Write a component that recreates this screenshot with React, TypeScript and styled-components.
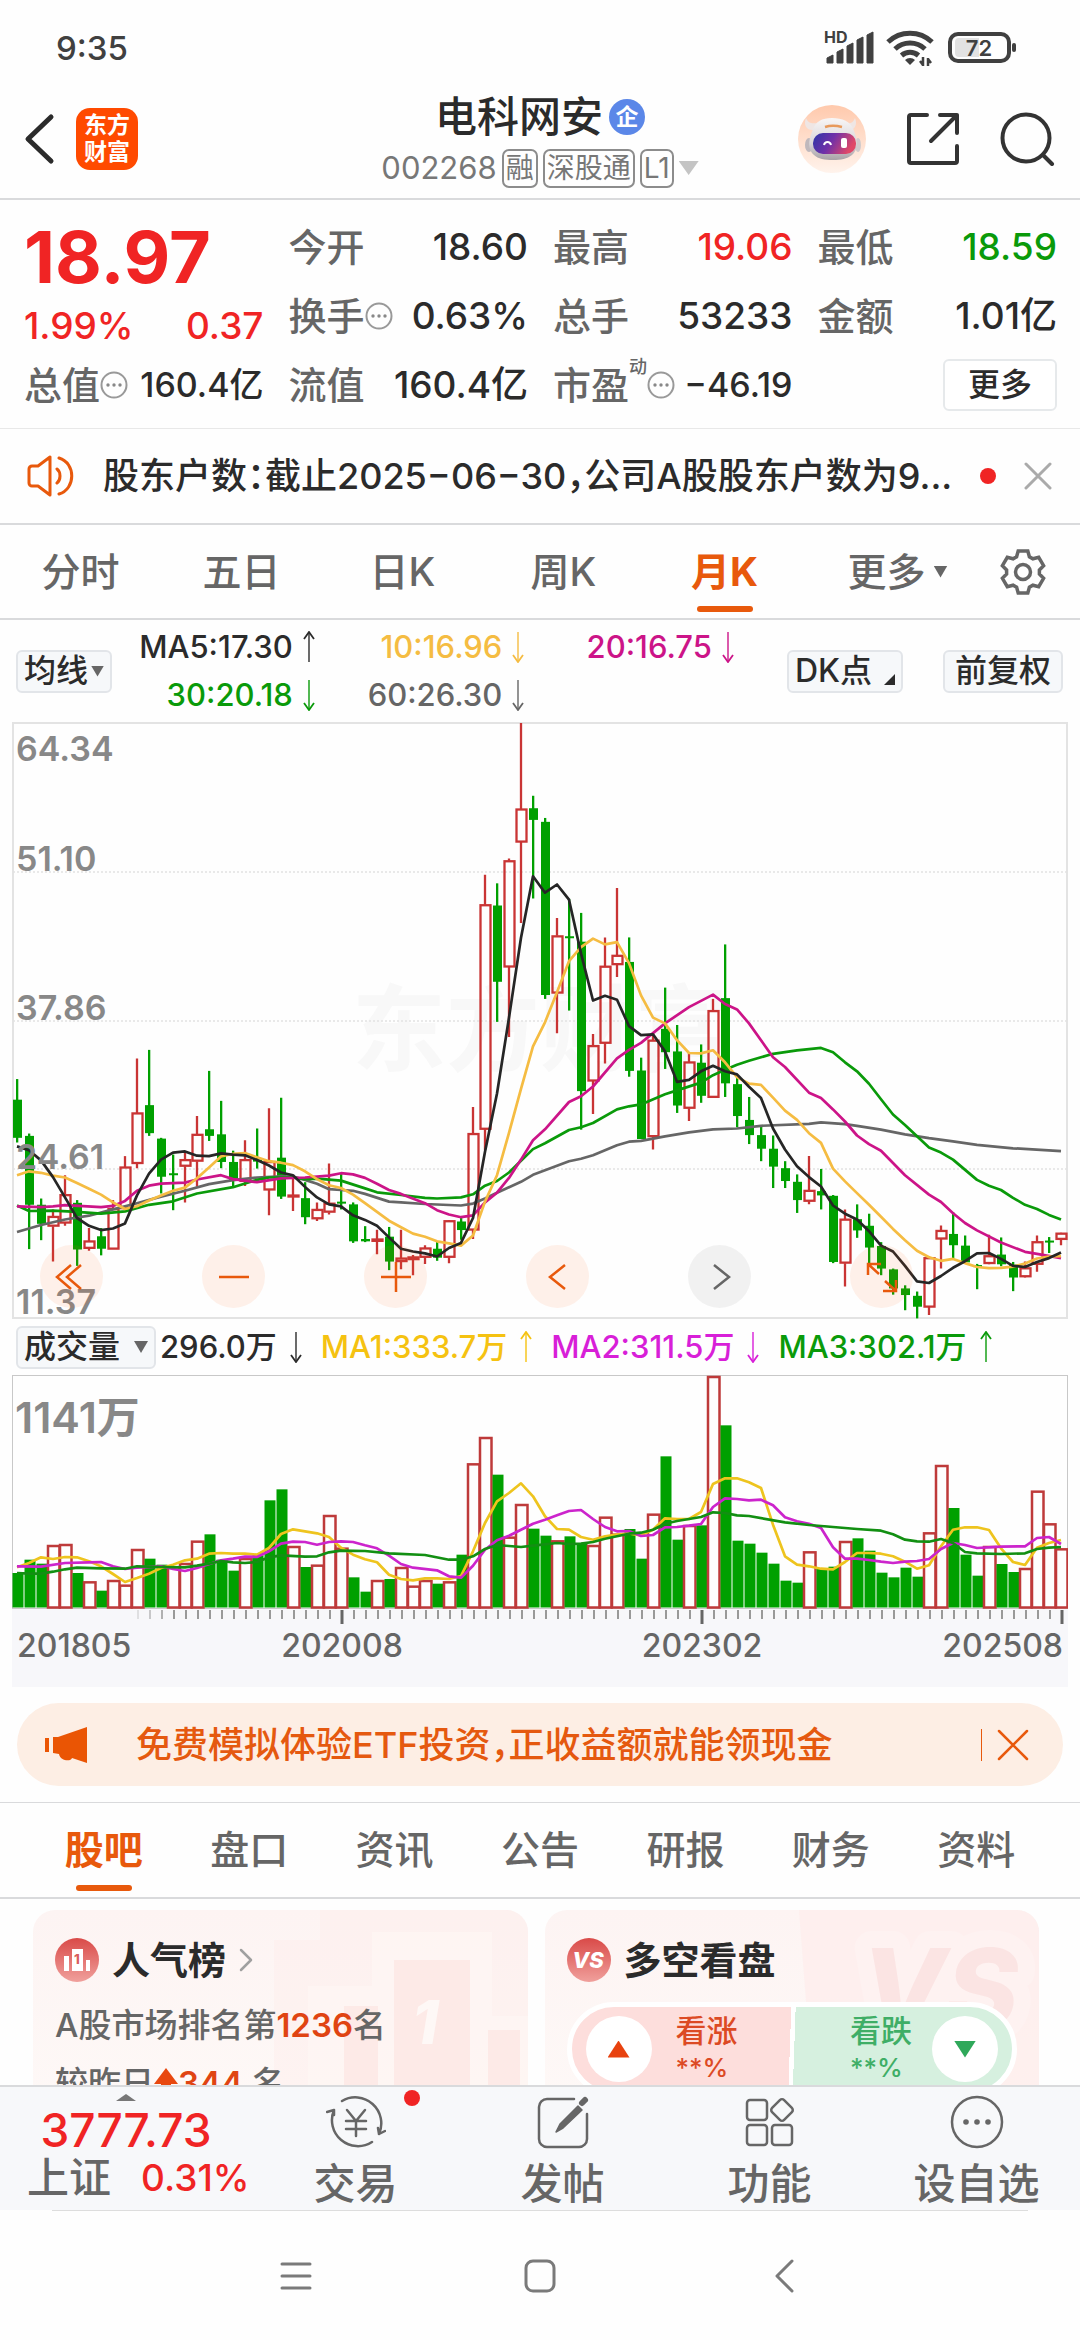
import React from "react";
import styled, { createGlobalStyle } from "styled-components";

const RED = "#f02424";
const GREEN = "#0a9a0a";
const ORANGE = "#e8590c";
const INK = "#2b2b2b";
const GREY = "#666666";
const LINE = "#d9dadc";

const GlobalStyle = createGlobalStyle`
  *, *::before, *::after { box-sizing: border-box; }
  body {
    margin: 0;
    background: #fefefe;
    color: ${INK};
    font-family: Inter, "Noto Sans CJK SC", sans-serif;
    font-weight: 500;
  }
  button {
    margin: 0;
    padding: 0;
    border: 0;
    background: none;
    color: inherit;
    font: inherit;
  }
  svg { display: block; flex: none; }
  h1, h2, p, dl, dt, dd { margin: 0; font: inherit; }
`;

/* ---------- data ---------- */

type Bar = [up: 0 | 1, high: number, top: number, bottom: number, low: number];
type Knot = [index: number, value: number];

const STEP = 12;
const PLOT_W = 1056;

const BARS: Bar[] = [
  [0, 923, 976, 1074, 1086], [0, 1063, 1069, 1246, 1360], [0, 1230, 1246, 1295, 1337], [1, 1258, 1276, 1301, 1392],
  [1, 1170, 1220, 1293, 1300], [0, 1234, 1241, 1361, 1403], [1, 1306, 1339, 1358, 1364], [0, 1306, 1327, 1359, 1376],
  [1, 1234, 1256, 1360, 1360], [1, 1121, 1149, 1256, 1256], [1, 870, 1010, 1140, 1152], [0, 848, 990, 1062, 1069],
  [0, 1074, 1076, 1174, 1217], [0, 1117, 1165, 1168, 1260], [1, 1113, 1130, 1147, 1240], [1, 1018, 1065, 1134, 1200],
  [0, 902, 1052, 1069, 1082], [0, 979, 1065, 1136, 1152], [0, 1107, 1136, 1182, 1202], [1, 1080, 1130, 1186, 1198],
  [0, 1050, 1130, 1134, 1153], [1, 998, 1135, 1208, 1273], [0, 971, 1125, 1225, 1231], [1, 1180, 1221, 1226, 1262],
  [0, 1188, 1229, 1278, 1296], [1, 1240, 1258, 1282, 1288], [1, 1140, 1242, 1265, 1271], [0, 1167, 1238, 1243, 1258],
  [0, 1240, 1245, 1340, 1344], [0, 1301, 1334, 1340, 1342], [1, 1310, 1334, 1340, 1373], [0, 1303, 1328, 1392, 1414],
  [1, 1310, 1383, 1392, 1412], [1, 1375, 1380, 1387, 1427], [1, 1350, 1357, 1381, 1398], [0, 1340, 1359, 1382, 1390],
  [1, 1285, 1287, 1381, 1396], [0, 1280, 1289, 1311, 1336], [1, 995, 1063, 1311, 1334], [1, 398, 475, 1052, 1105],
  [0, 420, 477, 673, 776], [1, 356, 362, 635, 815], [1, 8, 229, 314, 522], [0, 195, 227, 257, 459],
  [0, 252, 262, 707, 717], [1, 509, 555, 702, 805], [0, 460, 556, 560, 747], [0, 496, 570, 954, 1053],
  [1, 807, 837, 928, 1013], [1, 559, 633, 831, 883], [1, 432, 605, 629, 661], [0, 559, 622, 902, 917],
  [0, 868, 901, 1077, 1077], [1, 808, 823, 1071, 1104], [0, 688, 794, 854, 897], [0, 784, 852, 991, 1010],
  [1, 855, 879, 998, 1031], [0, 834, 881, 966, 984], [1, 717, 747, 970, 970], [0, 577, 715, 934, 969],
  [0, 920, 936, 1018, 1047], [0, 969, 1028, 1067, 1090], [0, 1045, 1067, 1102, 1134], [0, 1068, 1102, 1148, 1203],
  [0, 1134, 1152, 1185, 1203], [0, 1168, 1187, 1234, 1267], [1, 1121, 1209, 1237, 1245], [0, 1154, 1211, 1222, 1258],
  [0, 1221, 1223, 1393, 1396], [1, 1258, 1283, 1396, 1456], [0, 1245, 1283, 1312, 1331], [0, 1269, 1300, 1356, 1400],
  [0, 1342, 1352, 1410, 1427], [0, 1410, 1412, 1461, 1477], [0, 1453, 1461, 1478, 1517], [0, 1469, 1480, 1508, 1538],
  [1, 1378, 1382, 1509, 1529], [1, 1299, 1312, 1334, 1410], [0, 1265, 1321, 1350, 1384], [0, 1325, 1351, 1394, 1397],
  [0, 1398, 1401, 1404, 1463], [1, 1323, 1377, 1397, 1399], [0, 1330, 1374, 1399, 1404], [0, 1393, 1400, 1433, 1468],
  [1, 1392, 1408, 1431, 1433], [1, 1325, 1341, 1399, 1418], [0, 1329, 1338, 1342, 1370], [1, 1318, 1319, 1335, 1350],
];

const fromList = (start: number, values: number[]): Knot[] => values.map((v, i) => [start + i, v]);

const PRICE_LINES: { color: string; knots: Knot[] }[] = [
  {
    color: "#666666",
    knots: [[0, 1316], [2, 1298], [4, 1284], [6, 1274], [8, 1258], [10, 1242], [12, 1225], [14, 1210], [16, 1193], [18, 1183], [20, 1176], [22, 1173], [23, 1174], [24, 1182], [25, 1192], [26, 1206], [27, 1208], [28, 1210], [29, 1218], [31, 1238], [32, 1240], [34, 1244], [37, 1248], [38, 1243], [39, 1230], [40, 1215], [42, 1187], [43, 1169], [46, 1134], [47, 1128], [48, 1119], [50, 1093], [51, 1084], [52, 1082], [54, 1070], [56, 1060], [58, 1052], [60, 1050], [62, 1043], [66, 1038], [67, 1034], [69, 1039], [70, 1043], [72, 1053], [74, 1065], [76, 1075], [78, 1083], [80, 1092], [83, 1101], [87, 1108]],
  },
  {
    color: "#0a9a0a",
    knots: [[0, 1248], [1, 1262], [3, 1261], [5, 1264], [7, 1269], [9, 1263], [11, 1246], [13, 1237], [15, 1217], [18, 1201], [20, 1182], [21, 1176], [23, 1176], [24, 1180], [25, 1179], [27, 1184], [29, 1204], [30, 1214], [32, 1221], [34, 1228], [35, 1230], [37, 1227], [38, 1219], [39, 1197], [40, 1185], [41, 1163], [42, 1133], [43, 1103], [44, 1088], [46, 1054], [47, 1047], [48, 1036], [50, 1001], [51, 993], [52, 988], [54, 962], [55, 952], [57, 932], [58, 913], [59, 899], [60, 886], [61, 876], [63, 858], [65, 849], [67, 843], [68, 854], [69, 880], [70, 903], [71, 935], [72, 975], [73, 1014], [74, 1041], [75, 1070], [76, 1099], [77, 1112], [78, 1130], [80, 1182], [81, 1197], [82, 1208], [83, 1228], [84, 1246], [85, 1257], [86, 1272], [87, 1284]],
  },
  {
    color: "#cc1488",
    knots: [[0, 1250], [2, 1252], [3, 1250], [4, 1247], [7, 1252], [8, 1249], [9, 1236], [10, 1210], [11, 1197], [12, 1192], [14, 1189], [15, 1181], [17, 1170], [18, 1180], [20, 1188], [22, 1178], [24, 1176], [26, 1171], [27, 1165], [28, 1168], [29, 1177], [30, 1192], [31, 1208], [32, 1218], [34, 1242], [35, 1260], [36, 1271], [37, 1278], [38, 1273], [39, 1240], [40, 1215], [41, 1177], [42, 1130], [43, 1080], [44, 1052], [46, 982], [47, 967], [48, 942], [50, 870], [51, 848], [52, 830], [54, 780], [56, 738], [58, 706], [59, 730], [60, 744], [61, 780], [62, 823], [63, 867], [64, 892], [66, 958], [67, 972], [68, 1001], [69, 1032], [70, 1068], [71, 1090], [72, 1107], [74, 1170], [76, 1220], [77, 1239], [78, 1268], [79, 1293], [80, 1312], [82, 1343], [84, 1367], [85, 1372], [87, 1383]],
  },
  {
    color: "#f5bc42",
    knots: fromList(0, [1170, 1160, 1164, 1171, 1176, 1190, 1205, 1220, 1240, 1257, 1250, 1235, 1222, 1210, 1202, 1178, 1150, 1122, 1115, 1113, 1124, 1134, 1138, 1144, 1160, 1180, 1196, 1203, 1220, 1242, 1264, 1287, 1304, 1320, 1328, 1340, 1345, 1351, 1325, 1238, 1170, 1061, 948, 839, 777, 700, 620, 584, 562, 577, 571, 625, 708, 765, 780, 823, 856, 857, 849, 880, 918, 935, 938, 971, 1004, 1028, 1062, 1087, 1153, 1186, 1216, 1246, 1277, 1308, 1337, 1364, 1381, 1390, 1385, 1396, 1406, 1409, 1408, 1405, 1397, 1384, 1379, 1378]),
  },
  {
    color: "#262626",
    knots: fromList(0, [1096, 1106, 1132, 1175, 1227, 1280, 1300, 1311, 1307, 1294, 1222, 1166, 1130, 1112, 1109, 1120, 1121, 1114, 1117, 1119, 1131, 1145, 1163, 1170, 1200, 1227, 1245, 1250, 1273, 1285, 1300, 1330, 1359, 1366, 1371, 1379, 1357, 1344, 1280, 1110, 960, 765, 560, 402, 444, 423, 462, 600, 721, 709, 719, 787, 810, 808, 852, 930, 925, 903, 889, 903, 911, 943, 972, 1050, 1104, 1147, 1175, 1199, 1248, 1269, 1284, 1314, 1351, 1366, 1403, 1443, 1447, 1429, 1408, 1391, 1371, 1370, 1385, 1403, 1406, 1393, 1383, 1369]),
  },
];

const VOLUME_TOPS = [
  790, 750, 762, 706, 703, 790, 815, 843, 811, 825, 718, 747, 765, 770, 760, 693, 674, 750, 783, 745, 737, 572,
  539, 709, 772, 765, 616, 714, 803, 846, 811, 808, 772, 828, 811, 822, 815, 735, 461, 382, 495, 681, 583, 657,
  678, 692, 680, 700, 706, 621, 672, 658, 747, 612, 440, 690, 646, 647, 199, 347, 693, 702, 729, 762, 813, 819,
  725, 775, 771, 694, 686, 723, 789, 803, 774, 801, 668, 466, 595, 735, 798, 709, 763, 787, 775, 543, 641, 716,
];
const VOLUME_UP = new Set([3, 4, 6, 8, 9, 10, 13, 14, 15, 19, 23, 25, 26, 27, 30, 32, 33, 34, 36, 38, 39, 41, 42, 45, 48, 49, 50, 53, 56, 58, 66, 69, 76, 77, 81, 84, 85, 86, 87]);

const VOLUME_LINES: { color: string; knots: Knot[] }[] = [
  {
    color: "#eec41e",
    knots: fromList(0, [773, 760, 743, 748, 742, 743, 755, 770, 793, 817, 805, 792, 775, 765, 752, 747, 732, 730, 732, 732, 735, 715, 673, 659, 665, 671, 682, 714, 735, 749, 758, 795, 808, 812, 806, 806, 808, 799, 725, 640, 575, 550, 521, 560, 620, 658, 660, 682, 690, 680, 675, 671, 677, 660, 626, 628, 628, 607, 523, 506, 506, 518, 535, 645, 740, 765, 770, 777, 779, 757, 730, 730, 732, 740, 756, 777, 767, 710, 660, 653, 653, 661, 716, 757, 766, 714, 700, 691]),
  },
  {
    color: "#cc24cc",
    knots: [[0, 770], [2, 771], [4, 760], [6, 758], [7, 757], [8, 770], [9, 778], [10, 774], [12, 770], [13, 778], [14, 784], [15, 775], [17, 752], [18, 747], [19, 741], [20, 742], [21, 725], [22, 702], [23, 696], [24, 697], [25, 705], [26, 697], [27, 695], [28, 697], [29, 707], [30, 716], [31, 738], [32, 763], [33, 774], [35, 782], [36, 800], [37, 804], [38, 768], [39, 720], [40, 692], [41, 678], [42, 660], [43, 642], [44, 630], [45, 617], [46, 604], [47, 601], [48, 628], [49, 652], [50, 665], [51, 664], [52, 679], [53, 676], [54, 653], [55, 652], [56, 648], [57, 643], [58, 592], [59, 566], [60, 568], [61, 572], [62, 570], [63, 587], [64, 623], [65, 635], [66, 642], [67, 655], [68, 713], [69, 747], [70, 747], [71, 751], [72, 756], [73, 760], [74, 756], [75, 754], [76, 748], [77, 718], [78, 700], [79, 706], [80, 715], [82, 711], [84, 710], [85, 685], [86, 682], [87, 703]],
  },
  {
    color: "#128f12",
    knots: [[0, 790], [1, 792], [2, 792], [3, 786], [4, 779], [5, 774], [7, 776], [9, 777], [10, 770], [12, 772], [14, 773], [15, 768], [16, 762], [17, 754], [18, 758], [19, 760], [20, 757], [21, 743], [22, 737], [24, 741], [25, 740], [26, 728], [27, 723], [29, 724], [31, 731], [34, 736], [36, 750], [37, 750], [38, 740], [39, 718], [40, 706], [41, 709], [42, 712], [43, 708], [45, 700], [46, 703], [47, 702], [48, 697], [49, 687], [51, 672], [52, 669], [53, 660], [54, 642], [55, 634], [57, 622], [58, 608], [59, 610], [60, 617], [61, 619], [64, 638], [66, 646], [68, 652], [70, 658], [72, 663], [73, 674], [74, 690], [75, 695], [76, 696], [77, 688], [78, 700], [79, 727], [80, 731], [82, 733], [84, 731], [85, 718], [86, 714], [87, 712]],
  },
];

const barX = (i: number) => 5 + STEP * i;
const priceY = (v: number) => 1 + ((v - 8) * 595) / 1529;
const volumeY = (v: number) => 1 + (v - 199) / 3;
const toPoints = (knots: Knot[], y: (v: number) => number) =>
  knots.map(([i, v]) => `${barX(i)},${y(v).toFixed(1)}`).join(" ");

/* ---------- shared ---------- */

const Screen = styled.div`
  display: flex;
  flex-direction: column;
  height: 100vh;
  overflow: hidden;
`;

const Arrow = ({ up, color }: { up?: boolean; color: string }) => (
  <svg width="12" height="32" viewBox="0 0 12 32" fill="none" stroke={color} aria-hidden>
    <path d="M6 1V31" strokeWidth="1.4" />
    <path d={up ? "M1 8 6 1l5 7" : "M1 24l5 7 5-7"} strokeWidth="1.8" />
  </svg>
);

const Triangle = styled.span<{ $w: number; $h: number; $color: string; $up?: boolean }>`
  flex: none;
  width: ${(p) => p.$w}px;
  height: ${(p) => p.$h}px;
  background: ${(p) => p.$color};
  clip-path: ${(p) => (p.$up ? "polygon(50% 0, 100% 100%, 0 100%)" : "polygon(0 0, 100% 0, 50% 100%)")};
`;

const Chip = styled.button`
  display: flex;
  align-items: center;
  justify-content: center;
  gap: 3px;
  flex: none;
  height: 43px;
  padding: 0 6px;
  border: 2px solid #e2e5e9;
  border-radius: 6px;
  background: #f6f8fa;
  font-size: 32px;
  line-height: 36px;
  white-space: nowrap;
`;

/* ---------- status bar and header ---------- */

const StatusBar = styled.div`
  display: flex;
  align-items: center;
  justify-content: space-between;
  flex: none;
  height: 80px;
  padding: 16px 60px 0 56px;
  color: #404040;
  font-size: 33px;
  line-height: 40px;
`;

const StatusIcons = () => (
  <svg width="196" height="40" viewBox="0 0 196 40" fill="#404040" aria-hidden>
    <text x="0" y="15" fontSize="16" fontWeight="700">HD</text>
    {[8, 14, 20, 26, 31].map((h, i) => (
      <path key={h} d={`M${3 + i * 10} ${35}v-${h - 3}l6-3v${h}z`} stroke="#404040" strokeWidth="1" strokeLinejoin="round" />
    ))}
    <g fill="none" stroke="#404040" strokeWidth="5">
      <path d="M64 14a32 32 0 0 1 44 0" />
      <path d="M71 21a22 22 0 0 1 30 0" />
      <path d="M77.500 27.500a13 13 0 0 1 17 0" />
    </g>
    <path d="M81 32a7 7 0 0 1 10 0l-5 5z" />
    <path d="M99 29v9M99 37l-3-4M104 38v-8M104 31l3 4" stroke="#404040" strokeWidth="2.500" />
    <rect x="126" y="6" width="59" height="27" rx="8" fill="none" stroke="#404040" strokeWidth="4" />
    <path d="M131 14a4 4 0 0 1 4-4h20v19h-20a4 4 0 0 1-4-4z" fill="#e2e2e2" />
    <rect x="188" y="15" width="4" height="9" rx="2" />
    <text x="155" y="28" fontSize="22" fontWeight="600" textAnchor="middle">72</text>
  </svg>
);

const Header = styled.header`
  display: grid;
  grid-template-columns: 1fr auto 1fr;
  align-items: center;
  flex: none;
  height: 120px;
  padding: 0 24px;
  border-bottom: 2px solid ${LINE};
`;

const HeaderSide = styled.div<{ $end?: boolean }>`
  display: flex;
  align-items: center;
  gap: ${(p) => (p.$end ? 40 : 21)}px;
  justify-content: ${(p) => (p.$end ? "flex-end" : "flex-start")};
`;

const Logo = styled.div`
  display: grid;
  place-content: center;
  width: 62px;
  height: 62px;
  border-radius: 14px;
  background: #ff4a00;
  color: #fff;
  font-size: 23px;
  font-weight: 700;
  line-height: 27px;
`;

const TitleBlock = styled.div`
  display: flex;
  flex-direction: column;
  align-items: center;
  gap: 4px;
`;

const TitleRow = styled.div`
  display: flex;
  align-items: center;
  gap: 6px;
  font-size: 42px;
  line-height: 54px;
`;

const Badge = styled.span`
  display: grid;
  place-items: center;
  width: 36px;
  height: 36px;
  border-radius: 50%;
  background: #5b87e8;
  color: #fff;
  font-size: 23px;
  font-weight: 700;
  line-height: 30px;
`;

const CodeRow = styled.div`
  display: flex;
  align-items: center;
  gap: 5px;
  color: #777;
  font-size: 31px;
  font-weight: 400;
  line-height: 40px;
`;

const Tag = styled.span`
  height: 39px;
  padding: 0 2px;
  border: 2px solid #8c8c8c;
  border-radius: 7px;
  font-size: 28px;
  line-height: 35px;
`;

const Robot = () => (
  <svg width="68" height="68" viewBox="0 0 68 68" aria-hidden>
    <defs>
      <linearGradient id="halo" x1="0" y1="0" x2="0" y2="1">
        <stop offset="0" stopColor="#ffc9ac" />
        <stop offset="1" stopColor="#fff3ec" />
      </linearGradient>
      <linearGradient id="visor" x1="0" y1="0" x2="1" y2="0.300">
        <stop offset="0" stopColor="#2c36a8" />
        <stop offset="0.500" stopColor="#7030a8" />
        <stop offset="1" stopColor="#e04868" />
      </linearGradient>
      <linearGradient id="shell" x1="0" y1="0" x2="0" y2="1">
        <stop offset="0" stopColor="#f8f6f6" />
        <stop offset="0.600" stopColor="#dad6d9" />
        <stop offset="1" stopColor="#a8a2a6" />
      </linearGradient>
    </defs>
    <circle cx="34" cy="34" r="34" fill="url(#halo)" />
    <path d="M8 13c-3 7 1 13 8 12l3-7c-5 1-9 0-11-5zM57 13c3 7-1 13-7 12l-3-7c5 1 8 0 10-5z" fill="#efe6e4" />
    <ellipse cx="11" cy="40" rx="4" ry="7" fill="#bfb8bc" />
    <ellipse cx="60" cy="40" rx="3" ry="7" fill="#d0cacc" />
    <path d="M14 27c3-11 10-14 20-14s19 3 22 13c4 10 4 19-2 24-5 4-11 5-19 5s-15-1-19-5c-6-5-6-14-2-23z" fill="url(#shell)" />
    <path d="M27 22c5-1.500 11-1.500 17 0" stroke="#e89a5c" strokeWidth="2.500" fill="none" />
    <rect x="15" y="28" width="43" height="21" rx="10" fill="url(#visor)" />
    <path d="M26 40c1-4 6-4 7 0" stroke="#fff" strokeWidth="2" fill="none" />
    <rect x="43" y="33" width="6" height="10" rx="2" fill="#fff" />
  </svg>
);

/* ---------- quote ---------- */

const Quote = styled.section`
  display: grid;
  grid-template-columns: repeat(4, 1fr);
  grid-auto-rows: 69px;
  column-gap: 25px;
  flex: none;
  padding: 12px 23px 9px 24px;
  border-bottom: 1px solid #e8e8e8;
`;

const PriceCell = styled.div`
  grid-row: span 2;
  color: ${RED};
`;

const Price = styled.p`
  font-size: 72px;
  font-weight: 700;
  line-height: 90px;
`;

const Change = styled.p`
  display: flex;
  justify-content: space-between;
  font-size: 37px;
  line-height: 48px;
`;

const Field = styled.dl<{ $color?: string; $small?: boolean }>`
  display: flex;
  align-items: center;
  justify-content: space-between;
  white-space: nowrap;
  dt {
    display: flex;
    align-items: center;
    color: ${GREY};
    font-size: 38px;
    line-height: 56px;
  }
  dd {
    color: ${(p) => p.$color ?? INK};
    font-size: ${(p) => (p.$small ? 34 : 37)}px;
    line-height: 56px;
  }
`;

const Sup = styled.sup`
  align-self: flex-start;
  font-size: 18px;
  line-height: 20px;
`;

const MoreButton = styled.button`
  justify-self: end;
  align-self: center;
  width: 114px;
  height: 52px;
  border: 2px solid #e6e9eb;
  border-radius: 6px;
  background: #fff;
  font-size: 32px;
  line-height: 40px;
`;

const InfoDots = ({ size = 28 }: { size?: number }) => (
  <svg width={size} height={size} viewBox="0 0 28 28" aria-hidden>
    <circle cx="14" cy="14" r="12.500" fill="none" stroke="#999" strokeWidth="2" />
    <g fill="#888"><circle cx="8" cy="14" r="1.700" /><circle cx="14" cy="14" r="1.700" /><circle cx="20" cy="14" r="1.700" /></g>
  </svg>
);

/* ---------- notice and period tabs ---------- */

const Notice = styled.section`
  display: flex;
  align-items: center;
  flex: none;
  height: 96px;
  padding: 0 28px 0 27px;
  border-bottom: 2px solid ${LINE};
`;

const NoticeText = styled.p`
  flex: 1;
  min-width: 0;
  margin: 0 15px 0 28px;
  overflow: hidden;
  font-size: 36px;
  font-feature-settings: "halt";
  line-height: 52px;
  text-overflow: ellipsis;
  white-space: nowrap;
`;

const Dot = styled.span`
  width: 16px;
  height: 16px;
  border-radius: 50%;
  background: ${RED};
`;

const CloseButton = styled.button`
  margin-left: 28px;
`;

const PeriodTabs = styled.nav`
  display: grid;
  grid-template-columns: repeat(6, 1fr) 114px;
  flex: none;
  height: 95px;
  border-bottom: 2px solid ${LINE};
`;

const Tab = styled.button<{ $active?: boolean }>`
  position: relative;
  display: flex;
  align-items: center;
  justify-content: center;
  gap: 8px;
  color: ${(p) => (p.$active ? ORANGE : GREY)};
  font-size: 39px;
  font-weight: ${(p) => (p.$active ? 700 : 500)};
  line-height: 56px;
  white-space: nowrap;
  &::after {
    content: "";
    display: ${(p) => (p.$active ? "block" : "none")};
    position: absolute;
    bottom: 6px;
    left: 50%;
    width: 56px;
    height: 6px;
    margin-left: -28px;
    border-radius: 3px;
    background: ${ORANGE};
  }
`;

const MoreTab = styled(Tab)`
  padding-left: 24px;
`;

const gearPath =
  [0, 1, 2, 3, 4, 5]
    .flatMap((k) => ([[16.500, -23], [21.500, -13], [21.500, 13], [16.500, 23]] as const).map(([r, a]) => {
      const t = ((k * 60 - 90 + a) * Math.PI) / 180;
      return `${(24 + r * Math.cos(t)).toFixed(1)} ${(24 + r * Math.sin(t)).toFixed(1)}`;
    }))
    .map((p, i) => (i ? "L" : "M") + p)
    .join("") + "Z";

/* ---------- charts ---------- */

const Averages = styled.section`
  display: flex;
  align-items: center;
  flex: none;
  height: 102px;
  padding: 0 17px 0 16px;
`;

const AverageGrid = styled.div`
  display: grid;
  grid-template-columns: 30fr 31fr 31fr;
  flex: 1;
  margin-right: 53px;
`;

const AverageItem = styled.span<{ $color: string }>`
  display: flex;
  align-items: center;
  justify-content: flex-end;
  gap: 10px;
  color: ${(p) => p.$color};
  font-size: 31px;
  line-height: 48px;
`;

const AdjustChip = styled(Chip)`
  margin-left: 40px;
  padding: 0 10px;
`;

const ChartArea = styled.section`
  position: relative;
  flex: none;
  margin: 0 12px;
  svg { width: 100%; height: auto; }
`;

const ChartTools = styled.div`
  position: absolute;
  right: 0;
  bottom: 11px;
  left: 28px;
  display: grid;
  grid-template-columns: repeat(6, 63px);
  column-gap: 99px;
`;

const ToolButton = styled.button<{ $muted?: boolean }>`
  display: grid;
  place-items: center;
  height: 63px;
  border-radius: 50%;
  background: ${(p) => (p.$muted ? "rgba(0, 0, 0, 0.05)" : "rgba(255, 100, 20, 0.09)")};
  color: ${(p) => (p.$muted ? "#666" : ORANGE)};
  svg { width: 34px; height: 34px; }
`;

const TOOLS = [
  { label: "最早", d: "M16 5 2 17l14 12M26 5 12 17l14 12" },
  { label: "缩小", d: "M2 17h30" },
  { label: "放大", d: "M2 17h30M17 2v30" },
  { label: "左移", d: "M24 5 9 17l15 12" },
  { label: "右移", d: "M11 5l15 12-15 12" },
  { label: "全屏", d: "M3 15V4h13M3 4l11 10M31 20v11H18M31 31 20 21" },
];

const VolumeHeader = styled.section`
  display: flex;
  align-items: center;
  flex: none;
  height: 56px;
  padding: 0 16px;
  font-size: 31px;
  line-height: 44px;
  white-space: nowrap;
`;

const VolumeChip = styled(Chip)`
  gap: 14px;
  margin-right: 4px;
`;

const VolumeItem = styled.span<{ $color: string }>`
  display: flex;
  align-items: center;
  gap: 13px;
  margin-right: 19px;
  color: ${(p) => p.$color};
`;

const MajorTicks: { i: number; label: string; x: number; anchor: "start" | "middle" | "end" }[] = [
  { i: -1, label: "201805", x: 5, anchor: "start" },
  { i: 27, label: "202008", x: 330, anchor: "middle" },
  { i: 57, label: "202302", x: 690, anchor: "middle" },
  { i: 87, label: "202508", x: 1051, anchor: "end" },
];

const PriceChart = () => (
  <svg viewBox={`0 0 ${PLOT_W} 597`} role="img" aria-label="月K线图">
    <rect x="1" y="1" width="1054" height="595" fill="none" stroke="#e3e3e3" strokeWidth="2" />
    <text x="340" y="342" fontSize="94" fontWeight="700" fill="#f8f8f8">东方财富</text>
    {[150, 299, 447].map((y) => (
      <path key={y} d={`M1 ${y}H1055`} stroke="#e2e2e2" strokeWidth="1.500" strokeDasharray="2 2" />
    ))}
    {BARS.map(([up, high, top, bottom, low], i) => {
      const x = barX(i);
      const t = priceY(top);
      const b = priceY(bottom);
      return up ? (
        <g key={i} stroke="#c93434" strokeWidth="2.300" fill="none">
          <path d={`M${x} ${priceY(high)}V${t}M${x} ${b}V${priceY(low)}`} />
          <rect x={x - 4.500} y={t + 0.500} width="10" height={Math.max(b - t - 1, 1)} />
        </g>
      ) : (
        <g key={i} fill="#00a000">
          <rect x={x - 1} y={priceY(high)} width="2.300" height={priceY(low) - priceY(high)} />
          <rect x={x - 4} y={t} width="9" height={Math.max(b - t, 2)} />
        </g>
      );
    })}
    {PRICE_LINES.map((line) => (
      <polyline key={line.color} points={toPoints(line.knots, priceY)} fill="none" stroke={line.color} strokeWidth="2.700" strokeLinejoin="round" />
    ))}
    <g fontSize="34" fontWeight="600" fill="#888">
      <text x="4" y="39">64.34</text>
      <text x="4" y="149">51.10</text>
      <text x="4" y="298">37.86</text>
      <text x="4" y="447">24.61</text>
      <text x="4" y="592">11.37</text>
    </g>
  </svg>
);

const VolumeChart = () => (
  <svg viewBox={`0 0 ${PLOT_W} 234`} role="img" aria-label="成交量图">
    <rect x="0.500" y="0.500" width="1055" height="233" fill="none" stroke="#c8c8c8" />
    {VOLUME_TOPS.map((top, i) => {
      const y = volumeY(top);
      return VOLUME_UP.has(i) ? (
        <rect key={i} x={barX(i) - 5} y={y + 1} width="11.500" height={231.500 - y} fill="none" stroke="#be3a3a" strokeWidth="2.500" />
      ) : (
        <rect key={i} x={barX(i) - 4.500} y={y} width="11" height={232.500 - y} fill="#00a000" />
      );
    })}
    {VOLUME_LINES.map((line) => (
      <polyline key={line.color} points={toPoints(line.knots, volumeY)} fill="none" stroke={line.color} strokeWidth="2.700" strokeLinejoin="round" />
    ))}
    <text x="3" y="58" fontSize="43" fontWeight="600" fill="#888">1141万</text>
  </svg>
);

const TimeAxis = () => (
  <svg viewBox={`0 0 ${PLOT_W} 78`} aria-hidden>
    <rect width={PLOT_W} height="78" fill="#f7f7fa" />
    {BARS.map((_, i) => {
      const major = MajorTicks.some((t) => t.i === i);
      return i < 10 ? null : (
        <path
          key={i}
          d={`M${barX(i) + 1} 1v${major ? 14 : 9}`}
          stroke={major ? "#666" : "#999"}
          strokeWidth={major ? 3 : 2}
          opacity={Math.min(1, (i - 9) / 4)}
        />
      );
    })}
    <g fontSize="32" fontWeight="500" fill={GREY}>
      {MajorTicks.map((t) => (
        <text key={t.label} x={t.x} y="48" textAnchor={t.anchor}>{t.label}</text>
      ))}
    </g>
  </svg>
);

/* ---------- promo, section tabs, cards ---------- */

const Promo = styled.section`
  display: flex;
  align-items: center;
  flex: none;
  height: 83px;
  margin: 16px 17px;
  padding: 0 34px 0 27px;
  border-radius: 42px;
  background: #fdeee4;
  color: #e5590f;
`;

const PromoText = styled.p`
  flex: 1;
  margin-left: 49px;
  font-size: 36px;
  font-feature-settings: "halt";
  line-height: 52px;
  white-space: nowrap;
`;

const PromoClose = styled.button`
  padding-left: 15px;
  border-left: 1px solid ${ORANGE};
`;

const SectionTabs = styled.nav`
  display: grid;
  grid-template-columns: repeat(7, 1fr);
  flex: none;
  height: 97px;
  padding: 0 31px;
  border-top: 1px solid ${LINE};
  border-bottom: 2px solid ${LINE};
`;

const Cards = styled.main`
  display: grid;
  grid-template-columns: 1fr 1fr;
  gap: 17px;
  flex: 1;
  min-height: 0;
  padding: 11px 41px 0 33px;
  overflow: hidden;
`;

const Card = styled.article`
  position: relative;
  height: 260px;
  padding: 18px 22px;
  border-radius: 22px;
  background: linear-gradient(#fdf4f3, #fefaf8);
  overflow: hidden;
`;

const CardArt = styled.svg`
  position: absolute;
  top: 0;
  right: 0;
`;

const CardTitle = styled.h2`
  position: relative;
  display: flex;
  align-items: center;
  gap: 13px;
  height: 64px;
  font-size: 38px;
  font-weight: 700;
  line-height: 56px;
`;

const RankLine = styled.p`
  position: relative;
  display: flex;
  align-items: center;
  height: 58px;
  color: ${GREY};
  font-size: 33px;
  line-height: 48px;
  white-space: nowrap;
  strong { color: #e04412; font-weight: 600; }
`;

const RankLines = styled.div`
  padding-top: 4px;
`;

const VotePill = styled.div`
  position: relative;
  display: grid;
  grid-template-columns: 1fr 1fr;
  height: 94px;
  margin-top: 10px;
  border: 5px solid #fff;
  border-radius: 47px;
  background: linear-gradient(92deg, #fddedc 49.500%, #fff 49.500%, #fff 50.500%, #d6f0df 50.500%);
`;

const VoteButton = styled.button<{ $color: string; $end?: boolean }>`
  display: flex;
  flex-direction: ${(p) => (p.$end ? "row-reverse" : "row")};
  align-items: center;
  gap: ${(p) => (p.$end ? 20 : 24)}px;
  padding: 0 14px;
  color: ${(p) => p.$color};
  font-size: 31px;
  line-height: 38px;
  text-align: left;
  small { display: block; font-size: 26px; line-height: 36px; }
`;

const VoteDisc = styled.span`
  display: grid;
  place-items: center;
  width: 66px;
  height: 66px;
  border-radius: 50%;
  background: #fff;
`;

/* ---------- bottom bars ---------- */

const BottomBar = styled.footer`
  display: grid;
  grid-template-columns: 252px repeat(4, 1fr);
  flex: none;
  height: 125px;
  border-top: 2px solid ${LINE};
  background: #f7f8fa;
  color: ${GREY};
`;

const IndexButton = styled.button`
  display: flex;
  flex-direction: column;
  align-items: center;
  padding-top: 7px;
  color: ${RED};
`;

const IndexValue = styled.span`
  font-size: 46px;
  line-height: 58px;
`;

const IndexRow = styled.span`
  display: flex;
  align-items: center;
  gap: 30px;
  margin-left: 27px;
  align-self: flex-start;
  font-size: 37px;
  line-height: 38px;
  b { color: ${GREY}; font-size: 42px; font-weight: 500; }
`;

const NavButton = styled.button`
  position: relative;
  display: flex;
  flex-direction: column;
  align-items: center;
  gap: 4px;
  padding-top: 7px;
  font-size: 42px;
  line-height: 60px;
`;

const NavDot = styled(Dot)`
  position: absolute;
  top: 3px;
  left: calc(50% + 48px);
`;

const SystemBar = styled.div`
  display: grid;
  grid-template-columns: 1fr 1fr 1fr;
  flex: none;
  justify-items: center;
  align-items: center;
  height: 130px;
  margin: 0 52px;
  padding: 0 122px;
  border-top: 1px solid #dddddd;
`;

const stroke = (w: number, color = "currentColor") => ({
  fill: "none", stroke: color, strokeWidth: w, strokeLinecap: "round" as const, strokeLinejoin: "round" as const,
});

export default function App() {
  return (
    <Screen>
      <GlobalStyle />
      <StatusBar>
        <span>9:35</span>
        <StatusIcons />
      </StatusBar>

      <Header>
        <HeaderSide>
          <button aria-label="返回">
            <svg width="31" height="52" viewBox="0 0 31 52" {...stroke(5, "#2b2b2b")}><path d="M27 4 4 26l23 22" /></svg>
          </button>
          <Logo><span>东方</span><span>财富</span></Logo>
        </HeaderSide>
        <TitleBlock>
          <TitleRow><h1>电科网安</h1><Badge>企</Badge></TitleRow>
          <CodeRow>
            <span>002268</span>
            <Tag>融</Tag><Tag>深股通</Tag><Tag>L1</Tag>
            <Triangle $w={20} $h={14} $color="#c4c4c4" />
          </CodeRow>
        </TitleBlock>
        <HeaderSide $end>
          <button aria-label="智能助手"><Robot /></button>
          <button aria-label="分享">
            <svg width="54" height="54" viewBox="0 0 54 54" {...stroke(4, "#333")}>
              <path d="M21 3H5a2 2 0 0 0-2 2v44a2 2 0 0 0 2 2h44a2 2 0 0 0 2-2V34M34 3h17v18M51 3 25 29" />
            </svg>
          </button>
          <button aria-label="搜索">
            <svg width="56" height="54" viewBox="0 0 56 54" {...stroke(4, "#333")}>
              <circle cx="26" cy="26" r="23.500" /><path d="m43 43 9 9" />
            </svg>
          </button>
        </HeaderSide>
      </Header>

      <Quote>
        <PriceCell>
          <Price>18.97</Price>
          <Change><span>1.99%</span><span>0.37</span></Change>
        </PriceCell>
        <Field><dt>今开</dt><dd>18.60</dd></Field>
        <Field $color={RED}><dt>最高</dt><dd>19.06</dd></Field>
        <Field $color={GREEN}><dt>最低</dt><dd>18.59</dd></Field>
        <Field><dt>换手<InfoDots /></dt><dd>0.63%</dd></Field>
        <Field><dt>总手</dt><dd>53233</dd></Field>
        <Field><dt>金额</dt><dd>1.01亿</dd></Field>
        <Field $small><dt>总值<InfoDots /></dt><dd>160.4亿</dd></Field>
        <Field><dt>流值</dt><dd>160.4亿</dd></Field>
        <Field $small><dt>市盈<Sup>动</Sup><InfoDots /></dt><dd>−46.19</dd></Field>
        <MoreButton>更多</MoreButton>
      </Quote>

      <Notice>
        <svg width="48" height="42" viewBox="0 0 48 42" {...stroke(3, ORANGE)} aria-hidden>
          <path d="M23 2v38L11 31H5a3 3 0 0 1-3-3V14a3 3 0 0 1 3-3h6zM30 14c4 3 4 11 0 14M32 3c17 5 17 31 0 36" />
        </svg>
        <NoticeText>股东户数：截止2025−06−30，公司A股股东户数为9...</NoticeText>
        <Dot />
        <CloseButton aria-label="关闭">
          <svg width="28" height="28" viewBox="0 0 28 28" {...stroke(3, "#aaa")}><path d="m2 2 24 24M26 2 2 26" /></svg>
        </CloseButton>
      </Notice>

      <PeriodTabs>
        {["分时", "五日", "日K", "周K", "月K"].map((t) => <Tab key={t} $active={t === "月K"}>{t}</Tab>)}
        <MoreTab>更多<Triangle $w={14} $h={12} $color={GREY} /></MoreTab>
        <Tab aria-label="设置">
          <svg width="48" height="48" viewBox="0 0 48 48" fill="none" stroke={GREY} strokeWidth="3.500"><path d={gearPath} /><circle cx="24" cy="24" r="7.500" /></svg>
        </Tab>
      </PeriodTabs>

      <Averages>
        <Chip>均线<Triangle $w={13} $h={11} $color={GREY} /></Chip>
        <AverageGrid>
          <AverageItem $color={INK}>MA5:17.30<Arrow up color={INK} /></AverageItem>
          <AverageItem $color="#f5bc42">10:16.96<Arrow color="#f5bc42" /></AverageItem>
          <AverageItem $color="#cc1488">20:16.75<Arrow color="#cc1488" /></AverageItem>
          <AverageItem $color={GREEN}>30:20.18<Arrow color={GREEN} /></AverageItem>
          <AverageItem $color={GREY}>60:26.30<Arrow color={GREY} /></AverageItem>
        </AverageGrid>
        <Chip>
          DK点
          <svg width="20" height="30" viewBox="0 0 20 30" aria-hidden><path d="M20 18v11H9z" fill={INK} /></svg>
        </Chip>
        <AdjustChip>前复权</AdjustChip>
      </Averages>

      <ChartArea>
        <PriceChart />
        <ChartTools>
          {TOOLS.map((t, i) => (
            <ToolButton key={t.label} aria-label={t.label} $muted={i === 4}>
              <svg viewBox="0 0 34 34" fill="none" stroke="currentColor" strokeWidth="2.500"><path d={t.d} /></svg>
            </ToolButton>
          ))}
        </ChartTools>
      </ChartArea>

      <VolumeHeader>
        <VolumeChip>成交量<Triangle $w={14} $h={12} $color={GREY} /></VolumeChip>
        <VolumeItem $color={INK}>296.0万<Arrow color={INK} /></VolumeItem>
        <VolumeItem $color="#f5c211">MA1:333.7万<Arrow up color="#f5c211" /></VolumeItem>
        <VolumeItem $color="#d81fd8">MA2:311.5万<Arrow color="#d81fd8" /></VolumeItem>
        <VolumeItem $color={GREEN}>MA3:302.1万<Arrow up color={GREEN} /></VolumeItem>
      </VolumeHeader>

      <ChartArea>
        <VolumeChart />
        <TimeAxis />
      </ChartArea>

      <Promo>
        <svg width="43" height="38" viewBox="0 0 43 38" fill="#ea5504" aria-hidden>
          <path d="M1 12h4v14H1zM9 11h5L43 1v36L28 32c-1 4-12 3-13-4l-6-1z" />
        </svg>
        <PromoText>免费模拟体验ETF投资，正收益额就能领现金</PromoText>
        <PromoClose aria-label="关闭">
          <svg width="32" height="32" viewBox="0 0 32 32" {...stroke(2.500, ORANGE)}><path d="m2 2 28 28M30 2 2 30" /></svg>
        </PromoClose>
      </Promo>

      <SectionTabs>
        {["股吧", "盘口", "资讯", "公告", "研报", "财务", "资料"].map((t) => <Tab key={t} $active={t === "股吧"}>{t}</Tab>)}
      </SectionTabs>

      <Cards>
        <Card>
          <CardArt width="260" height="260" viewBox="0 0 260 260" aria-hidden>
            <path d="M52 0h208v260H6V30h46z" fill="#fdeeec" opacity="0.500" />
            <path d="M104 22h120v84h36v154H40V76h64z" fill="#fef6f4" opacity="0.700" />
            <path d="M126 50h76v210h-76zM76 96h34v164H76zM220 120h32v140h-32z" fill="#fbe3e0" opacity="0.600" />
            <text x="144" y="134" fontSize="60" fontWeight="800" fontStyle="italic" fill="#fef8f6">1</text>
          </CardArt>
          <CardTitle>
            <svg width="44" height="44" viewBox="0 0 44 44" aria-hidden>
              <defs><linearGradient id="disc" x1="0" y1="0" x2="0" y2="1"><stop offset="0" stopColor="#d94a48" /><stop offset="1" stopColor="#f0a09c" /></linearGradient></defs>
              <circle cx="22" cy="22" r="22" fill="url(#disc)" />
              <path d="M9 18h5v15H9zM17 11h11v22H17zM31 22h4v11h-4z" fill="#fff" />
              <text x="19" y="26" fontSize="13" fontWeight="800" fill="#d9605c">1</text>
            </svg>
            <span>人气榜</span>
            <svg width="14" height="24" viewBox="0 0 14 24" {...stroke(2.500, "#a0a0a0")} aria-hidden><path d="m2 2 10 10L2 22" /></svg>
          </CardTitle>
          <RankLines>
            <RankLine>A股市场排名第<strong>1236</strong>名</RankLine>
            <RankLine>
              较昨日
              <svg width="24" height="30" viewBox="0 0 24 30" fill="#e8480f" aria-hidden><path d="M12 0 24 16h-7v14H7V16H0z" /></svg>
              <strong>344</strong>&nbsp;名
            </RankLine>
          </RankLines>
        </Card>
        <Card>
          <CardArt width="240" height="260" viewBox="0 0 240 260" aria-hidden>
            <path d="M0 0h240v260H20z" fill="#fdeceb" opacity="0.700" />
            <text x="62" y="118" fontSize="110" fontWeight="800" fontStyle="italic" fill="#fbe2e0" stroke="#fef3f2" strokeWidth="34" strokeLinejoin="round" paintOrder="stroke" opacity="0.800">VS</text>
          </CardArt>
          <CardTitle>
            <svg width="44" height="44" viewBox="0 0 44 44" aria-hidden>
              <circle cx="22" cy="22" r="22" fill="url(#disc)" />
              <text x="21" y="30" fontSize="22" fontWeight="800" fontStyle="italic" textAnchor="middle" fill="#fff">VS</text>
            </svg>
            <span>多空看盘</span>
          </CardTitle>
          <VotePill>
            <VoteButton $color="#dc4a24">
              <VoteDisc><Triangle $w={22} $h={17} $color="#e8420f" $up /></VoteDisc>
              <span>看涨<small>**%</small></span>
            </VoteButton>
            <VoteButton $color="#3fae66" $end>
              <VoteDisc><Triangle $w={22} $h={17} $color="#2fa85a" /></VoteDisc>
              <span>看跌<small>**%</small></span>
            </VoteButton>
          </VotePill>
        </Card>
      </Cards>

      <BottomBar>
        <IndexButton>
          <Triangle $w={20} $h={7} $color="#777" $up />
          <IndexValue>3777.73</IndexValue>
          <IndexRow><b>上证</b>0.31%</IndexRow>
        </IndexButton>
        <NavButton>
          <svg width="60" height="56" viewBox="0 0 60 56" {...stroke(2.500)}>
            <path d="M16 7a26 26 0 0 1 37 33l6-3M53 40l-1-6M46 48A26 26 0 0 1 8 16l-7 2M8 16v5" />
            <path d="M21 16l9 11 9-11M30 27v15M20 27h20M20 35h20" />
          </svg>
          交易
          <NavDot />
        </NavButton>
        <NavButton>
          <svg width="56" height="56" viewBox="0 0 56 56" {...stroke(3)}>
            <path d="M39 5H12a8 8 0 0 0-8 8v32a8 8 0 0 0 8 8h32a8 8 0 0 0 8-8V20" strokeWidth="2.500" />
            <path d="M43 12 47 16 28 34l-7 4 4-8z" fill="currentColor" strokeWidth="1.500" />
            <path d="M47 9l3-3" strokeWidth="6" />
          </svg>
          发帖
        </NavButton>
        <NavButton>
          <svg width="56" height="56" viewBox="0 0 56 56" {...stroke(2.500)}>
            <rect x="5" y="6" width="20" height="20" rx="3" /><rect x="5" y="31" width="20" height="20" rx="3" />
            <rect x="30" y="31" width="20" height="20" rx="3" />
            <rect x="31.500" y="7.500" width="17" height="17" rx="3" transform="rotate(45 40 16)" />
          </svg>
          功能
        </NavButton>
        <NavButton>
          <svg width="56" height="56" viewBox="0 0 56 56" {...stroke(2.500)}>
            <circle cx="28" cy="28" r="25" />
            <g fill="currentColor" stroke="none"><circle cx="17" cy="28" r="2.800" /><circle cx="28" cy="28" r="2.800" /><circle cx="39" cy="28" r="2.800" /></g>
          </svg>
          设自选
        </NavButton>
      </BottomBar>

      <SystemBar>
        <button aria-label="最近任务"><svg width="32" height="32" viewBox="0 0 32 32" {...stroke(3, "#7a7a7a")}><path d="M2 4h28M2 16h28M2 28h28" /></svg></button>
        <button aria-label="主页"><svg width="32" height="34" viewBox="0 0 32 34" {...stroke(3, "#7a7a7a")}><rect x="2" y="2" width="28" height="30" rx="7" /></svg></button>
        <button aria-label="系统返回"><svg width="20" height="34" viewBox="0 0 20 34" {...stroke(3, "#7a7a7a")}><path d="M18 2 3 17l15 15" /></svg></button>
      </SystemBar>
    </Screen>
  );
}
